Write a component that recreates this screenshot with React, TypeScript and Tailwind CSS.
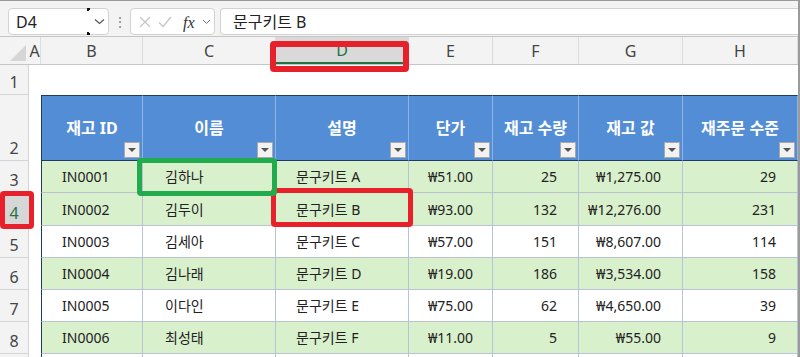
import React from "react";

const FONT = '"Noto Sans", "Noto Sans CJK KR", sans-serif';

const colW = [102, 133, 133, 84, 86, 104, 115];
const letters = ["B", "C", "D", "E", "F", "G", "H"];
const headers = ["재고 ID", "이름", "설명", "단가", "재고 수량", "재고 값", "재주문 수준"];
const rows: string[][] = [
  ["IN0001", "김하나", "문구키트 A", "₩51.00", "25", "₩1,275.00", "29"],
  ["IN0002", "김두이", "문구키트 B", "₩93.00", "132", "₩12,276.00", "231"],
  ["IN0003", "김세아", "문구키트 C", "₩57.00", "151", "₩8,607.00", "114"],
  ["IN0004", "김나래", "문구키트 D", "₩19.00", "186", "₩3,534.00", "158"],
  ["IN0005", "이다인", "문구키트 E", "₩75.00", "62", "₩4,650.00", "39"],
  ["IN0006", "최성태", "문구키트 F", "₩11.00", "5", "₩55.00", "9"],
  ["", "", "", "", "", "", ""],
];
const rowH = [32, 33, 32, 32, 32, 32, 32];
const green = [true, true, false, true, false, true, false];

function FilterBtn() {
  return (
    <div className="absolute right-[2px] bottom-[2px] w-[16px] h-[16px] bg-[#f2f2f2] border border-[#a9a9a9] flex items-center justify-center">
      <div className="w-0 h-0 border-l-[4px] border-r-[4px] border-t-[4px] border-l-transparent border-r-transparent border-t-[#555]" />
    </div>
  );
}

function RowHead({ n, h, sel }: { n: string; h: number; sel?: boolean }) {
  return (
    <div
      className={`w-[29px] shrink-0 border-r border-b border-[#d4d4d4] flex items-end justify-center text-[16px] leading-[24px] ${sel ? "bg-[#d6d6d6] text-[#217346]" : "bg-[#f3f3f3] text-[#444]"}`}
      style={{ height: h }}
    >
      {n}
    </div>
  );
}

export default function App() {
  return (
    <div
      className="relative w-[800px] h-[357px] overflow-hidden bg-[#f3f3f3] border-t border-r-2 border-[#9a9a9a]"
      style={{ fontFamily: FONT }}
    >
      {/* toolbar */}
      <div className="h-[35px] flex items-start pt-[7px] pl-[8px]">
        <div className="relative w-[101px] h-[27px] bg-white border border-[#d2d2d2] rounded-[4px] flex items-center pl-[7px] text-[16px] text-[#222]">
          D4
          <div className="absolute left-[78px] top-[-1px] w-[3px] h-[3px] border-l-2 border-t-2 border-[#111]" />
          <div className="absolute left-[78px] bottom-[-1px] w-[3px] h-[3px] border-l-2 border-b-2 border-[#111]" />
          <svg className="absolute left-[85px] top-[9px]" width="11" height="7" viewBox="0 0 11 7">
            <path d="M1 1.5 L5.5 5.5 L10 1.5" stroke="#555" strokeWidth="1.2" fill="none" />
          </svg>
        </div>
        <div className="w-[21px] h-[27px] flex items-center justify-center text-[#888] text-[14px]">⋮</div>
        <div className="relative w-[85px] h-[27px] bg-white border border-[#d2d2d2] rounded-[4px] flex items-center">
          <svg className="absolute left-[8px] top-[7px]" width="12" height="12" viewBox="0 0 12 12">
            <path d="M1 1 L11 11 M11 1 L1 11" stroke="#c4c4c4" strokeWidth="1.2" />
          </svg>
          <svg className="absolute left-[27px] top-[7px]" width="14" height="12" viewBox="0 0 14 12">
            <path d="M1 6.5 L5 10.5 L13 1" stroke="#c4c4c4" strokeWidth="1.2" fill="none" />
          </svg>
          <span
            className="absolute left-[52px] top-[2px] text-[16px] italic text-[#333]"
            style={{ fontFamily: '"Liberation Serif", serif' }}
          >
            fx
          </span>
          <svg className="absolute left-[71px] top-[10px]" width="9" height="6" viewBox="0 0 9 6">
            <path d="M1 1 L4.5 4.5 L8 1" stroke="#777" strokeWidth="1" fill="none" />
          </svg>
        </div>
        <div className="ml-[5px] flex-1 h-[27px] bg-white border-t border-l border-b border-[#d2d2d2] rounded-l-[4px] flex items-center pl-[12px] text-[16px] text-[#222]">
          문구키트 B
        </div>
      </div>

      {/* column headers */}
      <div className="flex h-[29px] border-t border-b border-[#c6c6c6] bg-[#f3f3f3] text-[16px] text-[#444]">
        <div className="w-[29px] shrink-0 relative">
          <svg className="absolute left-[10px] top-[8px]" width="16" height="16" viewBox="0 0 16 16">
            <path d="M16 0 L16 16 L0 16 Z" fill="#d6d6d6" />
          </svg>
        </div>
        <div className="w-[12px] shrink-0 flex items-center justify-center border-r border-[#dcdcdc]">A</div>
        {letters.map((l, i) => (
          <div
            key={l}
            className={`shrink-0 flex items-center justify-center border-r border-[#dcdcdc] ${l === "D" ? "bg-[#d9d9d9] text-[#217346] border-b-2 border-b-[#217346]" : ""}`}
            style={{ width: colW[i] }}
          >
            {l}
          </div>
        ))}
      </div>

      {/* row 1 */}
      <div className="flex h-[30px]">
        <RowHead n="1" h={30} />
        <div className="flex-1 bg-white" />
      </div>

      {/* row 2 header */}
      <div className="flex h-[66px]">
        <RowHead n="2" h={66} />
        <div className="w-[12px] shrink-0 bg-white" />
        {headers.map((t, i) => (
          <div
            key={t}
            className={`relative shrink-0 bg-[#538dd5] border-t border-t-[#1f3a63] border-r border-r-[#8fb3e3] border-b border-b-[#1f3a63] flex items-center justify-center text-white font-bold text-[16px] ${i === 0 ? "border-l border-l-[#1f3a63]" : ""}`}
            style={{ width: colW[i] }}
          >
            {t}
            <FilterBtn />
          </div>
        ))}
      </div>

      {/* data rows */}
      {rows.map((r, ri) => (
        <div key={ri} className="flex" style={{ height: rowH[ri] }}>
          <RowHead n={ri < 6 ? String(ri + 3) : ""} h={rowH[ri]} sel={ri === 1} />
          <div className="w-[12px] shrink-0 bg-white" />
          {r.map((v, ci) => {
            const align =
              ci <= 2
                ? "justify-start pl-[20px]"
                : ci === 3
                ? "justify-center"
                : "justify-end pr-[21px]";
            return (
              <div
                key={ci}
                className={`shrink-0 flex items-center text-[14px] text-[#222] border-r border-b border-[#b9c3d3] ${align} ${green[ri] ? "bg-[#d9f0cd]" : "bg-white"} ${ci === 0 ? "border-l border-l-[#1f3a63]" : ""} ${ci === 1 ? "pl-[22px]" : ""}`}
                style={{ width: colW[ci] }}
              >
                {v}
              </div>
            );
          })}
        </div>
      ))}

      {/* highlight overlays */}
      <div className="absolute left-[270px] top-[40px] w-[139px] h-[31px] border-[6px] border-[#e8202a] rounded-[4px]" />
      <div className="absolute left-[0px] top-[190px] w-[34px] h-[38px] border-[5px] border-[#e8202a] rounded-[4px]" />
      <div className="absolute left-[271px] top-[187px] w-[142px] h-[39px] border-[5px] border-[#e8202a] rounded-[4px]" />
      <div className="absolute left-[137px] top-[157px] w-[140px] h-[38px] border-[5px] border-[#22ab4c] rounded-[4px]" />
    </div>
  );
}
